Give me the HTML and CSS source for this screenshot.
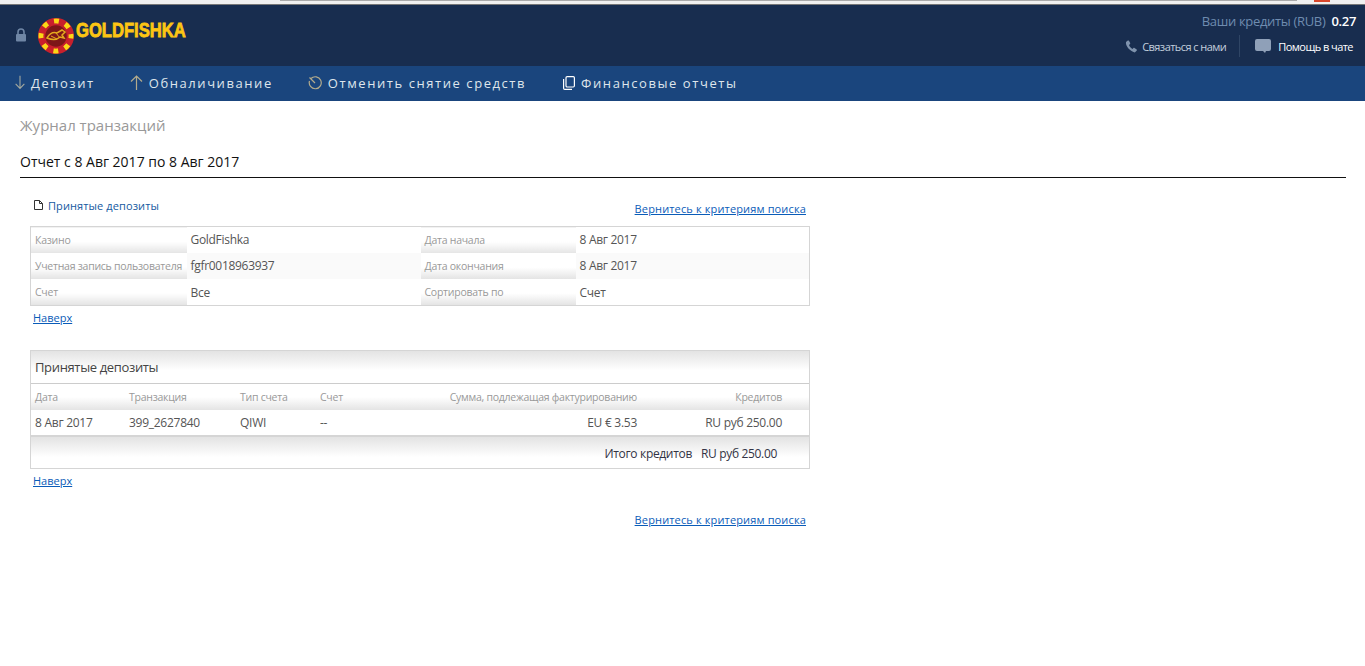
FILE: index.html
```html
<!DOCTYPE html>
<html lang="ru">
<head>
    <meta charset="UTF-8">
    <title>Журнал транзакций</title>
    <link rel="stylesheet" href="styles.css">
</head>
<body>
    <div class="browser-strip"><span class="strip-line"></span><span class="strip-red"></span></div>
    <header class="top-bar">
        <div class="brand">
            <svg class="lock-icon" width="12" height="14" viewBox="0 0 12 14">
                <path d="M3 6V4a3 3 0 0 1 6 0v2" fill="none" stroke="#6f86a5" stroke-width="1.6"/>
                <rect x="1" y="6" width="10" height="7.5" rx="1" fill="#6f86a5"/>
            </svg>
            <svg class="chip" width="36" height="36" viewBox="0 0 36 36">
                <circle cx="18" cy="18" r="18" fill="#c8202c"/>
                <circle cx="18" cy="18" r="15" fill="none" stroke="#fbd816" stroke-width="5" stroke-dasharray="5 6.78" stroke-dashoffset="2.5"/>
                <circle cx="18" cy="18" r="11.5" fill="#7d1618" stroke="#c8202c" stroke-width="1.5"/>
                <path d="M9 20c3-5 7-6 10-5l5-3 3 2-3 3 2 3-4-1c-3 3-8 3-13 1z" fill="none" stroke="#e5a91e" stroke-width="1.5"/>
                <path d="M13 18l6 3M18 15l4 5" stroke="#e5a91e" stroke-width="1"/>
            </svg>
            <span class="logo-text">GOLDFISHKA</span>
        </div>
        <div class="account">
            <div class="credits">Ваши кредиты (RUB) <b>0.27</b></div>
            <div class="contacts">
                <a class="contact-link">
                    <svg width="13" height="13" viewBox="0 0 13 13"><path d="M2.8.6 1 2c-.8 3.6 3.800 9.400 8.800 10.400l2-1.800c.3-.4.200-.8-.1-1L9.500 8c-.4-.3-.8-.2-1.100.1l-.8.9C6 8.300 4.500 6.600 4 5l1-.9c.3-.3.400-.7.200-1.100L3.900.8C3.600.400 3.200.300 2.800.6z" fill="#7f93ad"/></svg>
                    Связаться с нами
                </a>
                <span class="divider"></span>
                <a class="chat-link">
                    <svg width="16" height="14" viewBox="0 0 16 14"><path d="M2 0h12a2 2 0 0 1 2 2v8a2 2 0 0 1-2 2h-3l-1 2-2-2H2a2 2 0 0 1-2-2V2a2 2 0 0 1 2-2z" fill="#8fa0b8"/></svg>
                    Помощь в чате
                </a>
            </div>
        </div>
    </header>
    <nav class="main-nav">
        <a class="nav-item">
            <svg width="10" height="15" viewBox="0 0 11 15"><path d="M5.500 0v14M.7 9l4.800 5 4.800-5" fill="none" stroke="#a3a89e" stroke-width="1.200"/></svg>
            Депозит
        </a>
        <a class="nav-item">
            <svg width="13" height="15" viewBox="0 0 13 15"><path d="M6.500 15V1M1 6.500l5.500-5.500 5.500 5.500" fill="none" stroke="#b3ab8c" stroke-width="1.200"/></svg>
            Обналичивание
        </a>
        <a class="nav-item">
            <svg width="14" height="14" viewBox="0 0 14 14"><path d="M3 2.500a6 6 0 1 1-1.500 2.500M1.500 1.500 7 7" fill="none" stroke="#b3ab8c" stroke-width="1.200"/></svg>
            Отменить снятие средств
        </a>
        <a class="nav-item nav-reports">
            <svg width="12" height="14" viewBox="0 0 12 14"><rect x="3" y=".6" width="8.400" height="10.400" rx="1.200" fill="none" stroke="#fff" stroke-width="1.200"/><path d="M.6 3v9.200c0 .7.500 1.200 1.200 1.200H9" fill="none" stroke="#fff" stroke-width="1.200"/></svg>
            Финансовые отчеты
        </a>
    </nav>
    <main class="content">
        <h1 class="page-title">Журнал транзакций</h1>
        <h2 class="report-title">Отчет с 8 Авг 2017 по 8 Авг 2017</h2>
        <div class="report">
            <div class="report-head">
                <a class="section-link">
                    <svg width="9" height="10" viewBox="0 0 9 10"><path d="M.5.500h5l3 3v6h-8z" fill="#fff" stroke="#333"/><path d="M5.500.500v3h3" fill="none" stroke="#333"/></svg>
                    Принятые депозиты
                </a>
                <a class="back-link" href="#">Вернитесь к критериям поиска</a>
            </div>
            <table class="info-table">
                <tr>
                    <td class="label label-first">Казино</td>
                    <td class="value value-first">GoldFishka</td>
                    <td class="label label-second">Дата начала</td>
                    <td class="value">8 Авг 2017</td>
                </tr>
                <tr class="alt">
                    <td class="label">Учетная запись пользователя</td>
                    <td class="value">fgfr0018963937</td>
                    <td class="label">Дата окончания</td>
                    <td class="value">8 Авг 2017</td>
                </tr>
                <tr>
                    <td class="label">Счет</td>
                    <td class="value">Все</td>
                    <td class="label">Сортировать по</td>
                    <td class="value">Счет</td>
                </tr>
            </table>
            <a class="top-link" href="#">Наверх</a>

            <div class="deposits">
                <div class="deposits-title">Принятые депозиты</div>
                <table class="deposits-table">
                    <tr class="col-head">
                        <th class="col-date">Дата</th>
                        <th class="col-trans">Транзакция</th>
                        <th class="col-type">Тип счета</th>
                        <th class="col-acc">Счет</th>
                        <th class="col-sum num">Сумма, подлежащая фактурированию</th>
                        <th class="col-credits num">Кредитов</th>
                    </tr>
                    <tr class="col-row">
                        <td>8 Авг 2017</td>
                        <td>399_2627840</td>
                        <td>QIWI</td>
                        <td>--</td>
                        <td class="num">EU € 3.53</td>
                        <td class="col-credits num">RU руб 250.00</td>
                    </tr>
                </table>
                <div class="deposits-total"><span>Итого кредитов</span><span>RU руб 250.00</span></div>
            </div>
            <a class="top-link" href="#">Наверх</a>
            <div class="report-foot"><a class="back-link" href="#">Вернитесь к критериям поиска</a></div>
        </div>
    </main>
</body>
</html>
```

FILE: styles.css
```css
* {
    margin: 0;
    padding: 0;
    box-sizing: border-box;
}
html, body {
    height: 100%;
    overflow: hidden;
}
body {
    font-family: "Open Sans", sans-serif;
    font-size: 12px;
    color: #555;
    background: #fff;
}
a {
    color: #0a5cb8;
}
.browser-strip {
    height: 5px;
    display: flex;
    align-items: flex-start;
    background: #f0f0f0;
    border-bottom: 1px solid #777;
}
.strip-line {
    width: 1017px;
    height: 1px;
    margin-left: 280px;
    background: #aaa;
}
.strip-red {
    width: 16px;
    height: 2px;
    margin-left: 17px;
    background: #d9472b;
}
.top-bar {
    height: 61px;
    background: #182d4f;
    display: flex;
    justify-content: space-between;
}
.brand {
    display: flex;
    align-items: center;
    height: 60px;
    padding-left: 15px;
}
.lock-icon {
    margin-right: 11px;
}
.chip {
    margin-top: 1px;
}
.logo-text {
    display: inline-block;
    margin-left: 2px;
    margin-top: -10px;
    font-family: "Liberation Sans", sans-serif;
    font-size: 20px;
    font-weight: 700;
    color: #fdc513;
    -webkit-text-stroke: .8px #fdc513;
    transform: scaleX(.83);
    transform-origin: left center;
}
.account {
    padding: 8px 9px 0 0;
    text-align: right;
}
.credits {
    font-size: 13px;
    line-height: 16px;
    letter-spacing: -.33px;
    color: #6f8cb0;
}
.credits b {
    margin-left: 3px;
    font-weight: 600;
    color: #fff;
}
.contacts {
    display: flex;
    align-items: center;
    justify-content: flex-end;
    margin-top: 6px;
    height: 22px;
    padding-right: 3px;
    font-size: 11px;
    letter-spacing: -.55px;
}
.contact-link, .chat-link {
    display: flex;
    align-items: center;
    gap: 4px;
    color: #c3cfdd;
}
.chat-link {
    gap: 7px;
    color: #fff;
}
.divider {
    width: 1px;
    height: 22px;
    margin: 0 15px 0 13px;
    background: #2f4565;
}
.main-nav {
    height: 35px;
    background: #1a457d;
    display: flex;
    align-items: center;
    padding-left: 15px;
    gap: 35px;
}
.nav-item {
    display: flex;
    align-items: center;
    gap: 6px;
    padding-bottom: 2px;
    font-size: 13px;
    font-weight: 400;
    letter-spacing: 1.57px;
    color: #dfe6ec;
}
.nav-reports {
    margin-left: 2px;
}
.content {
    padding: 14px 19px 0 20px;
}
.page-title {
    font-size: 15px;
    font-weight: 400;
    line-height: 20px;
    color: #999;
}
.report-title {
    margin-top: 17px;
    padding-bottom: 5px;
    border-bottom: 1px solid #111;
    font-size: 14px;
    font-weight: 400;
    line-height: 20px;
    color: #111;
}
.report {
    width: 780px;
    margin-left: 10px;
}
.report-head {
    display: flex;
    justify-content: space-between;
    padding: 20px 4px 0;
    height: 48px;
}
.section-link {
    display: flex;
    align-items: center;
    gap: 5px;
    height: 14px;
    font-size: 11px;
    letter-spacing: .1px;
    color: #14599f;
}
.back-link {
    margin-top: 3px;
    font-size: 11px;
    line-height: 16px;
    letter-spacing: .14px;
}
table {
    width: 100%;
    border-collapse: collapse;
    table-layout: fixed;
}
.info-table {
    border: 1px solid #d5d5d5;
    height: 80px;
}
.info-table td {
    height: 26px;
    padding: 0 4px;
    font-size: 12px;
    letter-spacing: -.3px;
}
.info-table .label {
    font-size: 10.5px;
    letter-spacing: -.25px;
    color: #999;
    background: linear-gradient(#fff 55%, #e4e4e4);
    white-space: nowrap;
}
.info-table .value {
    color: #555;
}
.label-first {
    width: 156px;
}
.value-first {
    width: 234px;
}
.label-second {
    width: 155px;
}
.alt .value {
    background: #fafafa;
}
.top-link {
    display: block;
    margin: 4px 0 0 3px;
    font-size: 11px;
    line-height: 16px;
}
.deposits {
    margin-top: 24px;
    border: 1px solid #d5d5d5;
}
.deposits-title {
    height: 33px;
    padding-left: 4px;
    border-bottom: 1px solid #ccc;
    background: linear-gradient(#e3e3e3, #fff 60%);
    font-size: 13px;
    line-height: 32px;
    letter-spacing: -.35px;
    color: #444;
}
.deposits-table th, .deposits-table td {
    padding: 0 4px;
    text-align: left;
    font-weight: 400;
}
.deposits-table .num {
    text-align: right;
}
.deposits-table .col-credits {
    padding-right: 27px;
}
.col-head th {
    height: 26px;
    font-size: 10.5px;
    letter-spacing: -.25px;
    color: #999;
    background: linear-gradient(#fff 50%, #e4e4e4);
}
.col-row td {
    height: 25px;
    font-size: 12px;
    letter-spacing: -.27px;
    color: #555;
}
.col-date {
    width: 94px;
}
.col-trans {
    width: 111px;
}
.col-type {
    width: 80px;
}
.col-acc {
    width: 100px;
}
.col-sum {
    width: 225px;
}
.deposits-total {
    height: 33px;
    display: flex;
    justify-content: flex-end;
    align-items: center;
    gap: 9px;
    padding: 1px 32px 0 0;
    border-top: 2px solid #d5d5d5;
    background: linear-gradient(#e3e3e3, #fff 65%);
    font-size: 12px;
    letter-spacing: -.33px;
    color: #334;
}
.report-foot {
    display: flex;
    justify-content: flex-end;
    padding: 20px 4px 0;
}
```
